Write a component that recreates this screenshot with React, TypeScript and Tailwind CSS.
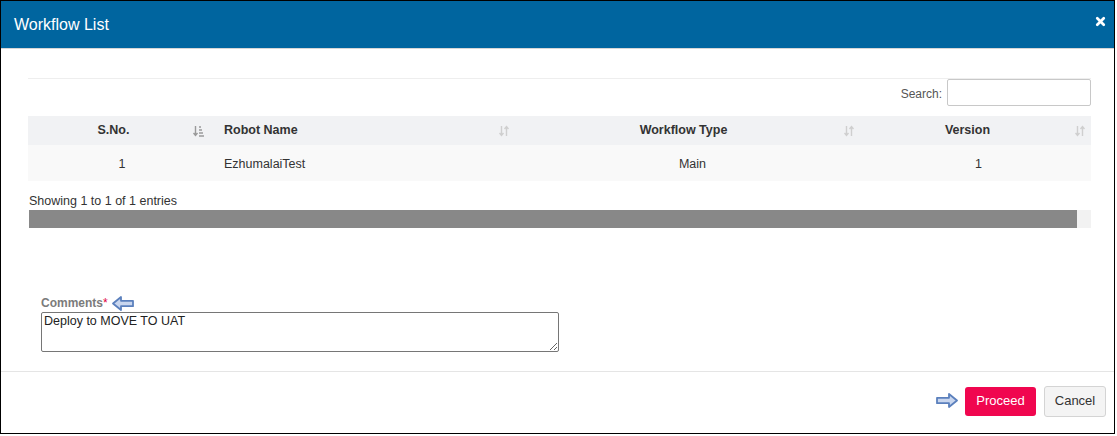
import { X } from 'lucide-react'

function SortBoth() {
  return (
    <svg width="10" height="12" viewBox="0 0 10 12" className="text-[#cfcfcf]">
      <path d="M2.5 1v9M0.5 8l2 2.5 2-2.5" stroke="currentColor" strokeWidth="1.4" fill="none" />
      <path d="M7.5 11V2M5.5 4l2-2.5 2 2.5" stroke="currentColor" strokeWidth="1.4" fill="none" />
    </svg>
  )
}

function SortAsc() {
  return (
    <svg width="11" height="12" viewBox="0 0 11 12" className="text-[#9a9a9a]">
      <path d="M2.5 1v9M0.5 8l2 2.5 2-2.5" stroke="currentColor" strokeWidth="1.4" fill="none" />
      <path d="M6 2h2M6 5h3M6 8h4M6 11h5" stroke="currentColor" strokeWidth="1.3" fill="none" />
    </svg>
  )
}

function HintArrow({ dir }: { dir: 'left' | 'right' }) {
  return (
    <svg width="22" height="15" viewBox="0 0 22 15" className={dir === 'left' ? '' : 'rotate-180'}>
      <path d="M1 7.5 L9 1 L9 4.8 L21 4.8 L21 10.2 L9 10.2 L9 14 Z" fill="#c9d6ee" stroke="#5b80bd" strokeWidth="1.8" strokeLinejoin="round" />
    </svg>
  )
}

export default function App() {
  const cols = [
    { label: 'S.No.', align: 'text-center', w: 'w-[182px]', active: true },
    { label: 'Robot Name', align: 'text-left', w: 'w-[305px]', active: false },
    { label: 'Workflow Type', align: 'text-center', w: 'w-[345px]', active: false },
    { label: 'Version', align: 'text-center', w: 'flex-1', active: false },
  ]

  return (
    <div className="w-[1117px] h-[436px] bg-white" style={{ fontFamily: '"Liberation Sans", Arial, sans-serif' }}>
      <div className="w-[1115px] h-[434px] border border-black flex flex-col">
        <div className="h-[48px] bg-[#00659f] flex items-center justify-between pl-[13px] pr-[7px] border-b border-[#d6d6d6]">
          <h1 className="text-white text-[16px]">Workflow List</h1>
          <X className="w-[13px] h-[13px] text-white mb-[7px]" strokeWidth={5} />
        </div>

        <div className="pt-[29px] px-[27px]">
          <div className="border-t border-[#eeeeee] w-[1063px]">
            <div className="flex justify-end items-start gap-[5px] h-[37px]">
              <span className="text-[12px] text-[#555] mt-[6px]">Search:</span>
              <input className="w-[144px] h-[27px] border border-[#c8c8c8] rounded-[2px]" />
            </div>
            <div className="flex h-[29px] bg-[#f1f2f4] text-[12.5px] font-bold text-[#333] items-center">
              {cols.map((c, i) => (
                <div key={i} className={`${c.w} flex items-center h-full pr-[6px] ${i === 1 ? 'pl-[14px]' : ''}`}>
                  <span className={`flex-1 ${c.align} ${i === 0 ? 'pl-[6px]' : ''} ${i === 2 ? 'pl-[8px]' : ''}`}>{c.label}</span>
                  {c.active ? <SortAsc /> : <SortBoth />}
                </div>
              ))}
            </div>
            <div className="flex h-[36px] bg-[#f9f9f9] text-[12.5px] text-[#333] items-center pt-[3px]">
              <div className="w-[182px] text-center pl-[6px]">1</div>
              <div className="w-[305px] pl-[14px]">EzhumalaiTest</div>
              <div className="w-[345px] text-center pl-[10px]">Main</div>
              <div className="flex-1 text-center pl-[6px]">1</div>
            </div>
            <div className="text-[12.5px] text-[#333] pt-[13px] pl-[1px] leading-[14px]">Showing 1 to 1 of 1 entries</div>
            <div className="flex h-[18px] mt-[2px]">
              <div className="w-[1048px] ml-[1px] bg-[#888888]" />
              <div className="flex-1 bg-[#f2f2f2]" />
            </div>
          </div>
        </div>

        <div className="pt-[68px] pl-[40px]">
          <div className="flex items-center gap-[4px] h-[14px]">
            <span className="text-[12px] font-bold text-[#7b7b7b]">
              Comments<span className="text-[#e0003c] font-normal">*</span>
            </span>
            <HintArrow dir="left" />
          </div>
          <textarea
            defaultValue="Deploy to MOVE TO UAT"
            className="block w-[518px] h-[40px] mt-[2px] border border-[#767676] rounded-[2px] px-[2px] py-[1px] text-[12.5px] text-[#222] leading-[14px]"
          />
        </div>

        <div className="mt-auto border-t border-[#e5e5e5] h-[62px] flex items-center justify-end gap-[8px] pr-[8px]">
          <div className="mr-[-1px] mb-[4px]">
            <HintArrow dir="right" />
          </div>
          <button className="h-[29px] w-[71px] bg-[#f0064f] text-white text-[13px] rounded-[3px] mb-[3px]">Proceed</button>
          <button className="h-[31px] w-[62px] bg-[#f4f4f4] border border-[#d4d4d4] text-[#333] text-[13px] rounded-[3px] mb-[3px]">Cancel</button>
        </div>
      </div>
    </div>
  )
}
